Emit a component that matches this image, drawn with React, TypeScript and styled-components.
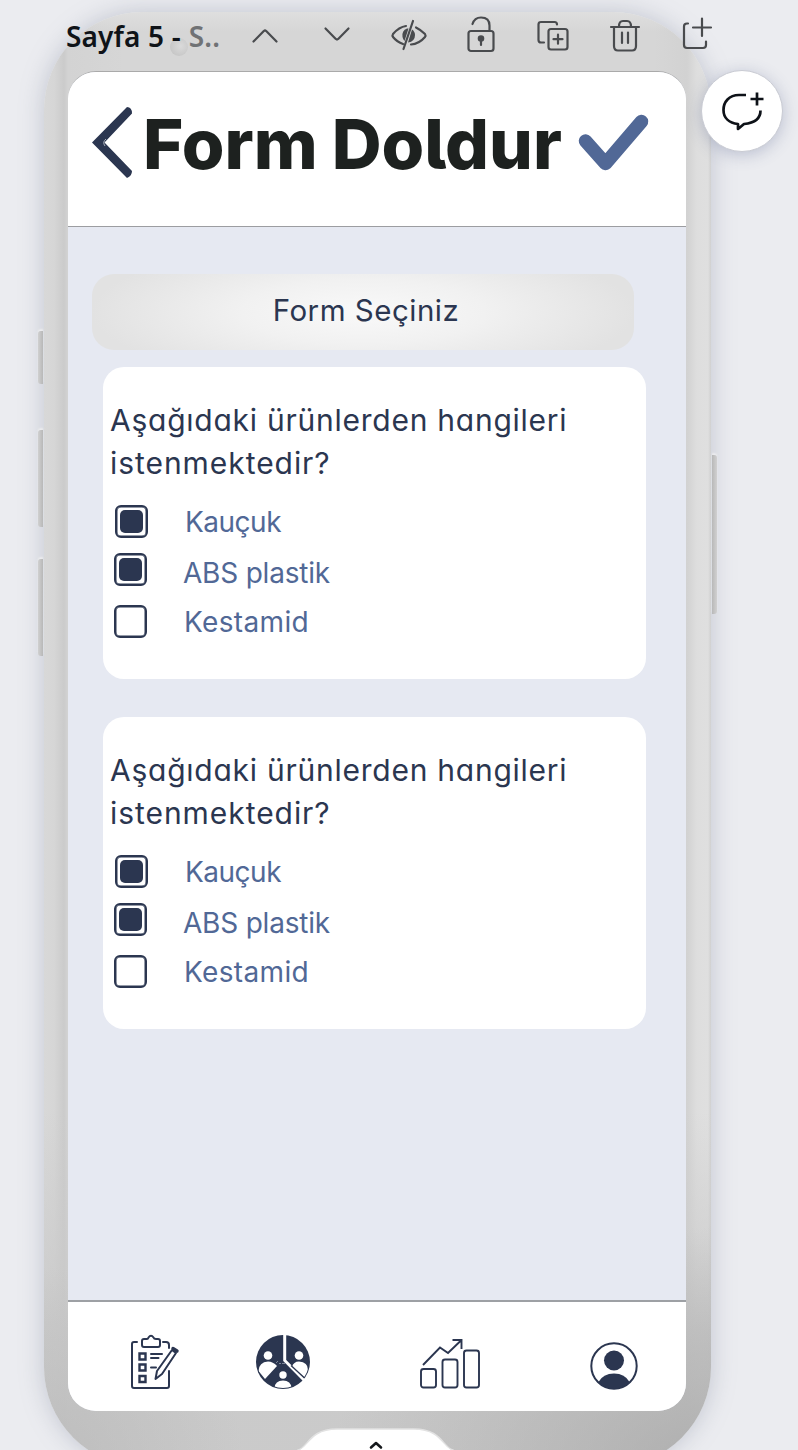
import React from "react";
import styled, { createGlobalStyle } from "styled-components";

const navy = "#2b3650";
const blue = "#516896";

const GlobalStyle = createGlobalStyle`
  * { box-sizing: border-box; }
  body { margin: 0; background: #ebecf0; }
  svg { display: block; overflow: visible; flex: none; }
  h1, h2, p { margin: 0; font-weight: 400; }
`;

const Page = styled.div`
  position: relative;
  width: 798px;
  height: 1450px;
  overflow: hidden;
  padding: 12px 0 0 44px;
  background: #ebecf0;
`;

const Phone = styled.div`
  position: relative;
  width: 667px;
  height: 1455px;
  padding: 59px 25px 0 24px;
  border-radius: 98px 98px 100px 100px;
  background:
    linear-gradient(180deg, rgba(226, 226, 226, 0.7) 0, rgba(215, 215, 215, 0) 20px),
    radial-gradient(ellipse 380px 240px at 100% 100%, rgba(160, 160, 160, 0.65), rgba(160, 160, 160, 0)),
    radial-gradient(ellipse 200px 200px at 0% 100%, rgba(180, 180, 180, 0.6), rgba(180, 180, 180, 0)),
    linear-gradient(180deg, rgba(200, 200, 200, 0) 1100px, rgba(201, 201, 201, 0.9) 1320px),
    linear-gradient(90deg, #d8d8d8 0, #d6d6d6 10px, #cbcbcb 20px, #d3d3d3 24px, #d6d6d6 80px, #d6d6d6 610px, #d2d2d2 643px, #dedede 653px, #dfdfdf 664px, #d0d0d0 667px);
  box-shadow: 0 0 24px rgba(120, 128, 150, 0.36);
`;

const SideKey = styled.span<{ $side: "left" | "right"; $top: number; $height: number }>`
  position: absolute;
  ${(p) => p.$side}: -6px;
  top: ${(p) => p.$top}px;
  width: 5px;
  height: ${(p) => p.$height}px;
  border-radius: ${(p) => (p.$side === "left" ? "3px 0 0 3px" : "0 3px 3px 0")};
  background: linear-gradient(${(p) => (p.$side === "left" ? "90deg" : "270deg")}, #d0d0d0, #b8b8b8);
  box-shadow: 0 -2px 2px rgba(240, 240, 240, 0.8);
`;

const Screen = styled.main`
  display: flex;
  flex-direction: column;
  width: 618px;
  height: 1340px;
  overflow: hidden;
  border-top: 1px solid #aaaaaa;
  border-radius: 28px;
  background: #e6e9f2;
`;

const Header = styled.header`
  display: flex;
  align-items: flex-start;
  height: 155px;
  padding: 34px 0 0 24px;
  background: #ffffff;
  border-bottom: 1px solid #9c9da1;
`;

const Title = styled.h1`
  width: 435px;
  margin: -4px 0 0 9px;
  font: 760 69px/84px Inter, sans-serif;
  font-feature-settings: "cv05";
  letter-spacing: 0;
  word-spacing: -1px;
  white-space: nowrap;
  color: #1d211f;
`;

const CheckMark = styled.svg`
  margin-top: 8px;
`;

const Content = styled.section`
  display: flex;
  flex-direction: column;
  flex: 1;
  padding: 47px 0 0 24px;
`;

const FormSelect = styled.button`
  width: 542px;
  height: 76px;
  padding: 0 0 4px 6px;
  border: 0;
  border-radius: 22px;
  background: radial-gradient(ellipse 50% 95% at 50% 50%, #f9f9f9 0%, #f1f1f1 45%, #e2e2e2 100%);
  color: ${navy};
  font: 400 29.5px/40px Inter, sans-serif;
  font-feature-settings: "cv11";
  letter-spacing: 0.5px;
`;

const Card = styled.article<{ $gap: number }>`
  width: 542.5px;
  height: 312px;
  margin: ${(p) => p.$gap}px 0 0 11px;
  padding: 32px 0 0 7px;
  border-radius: 21px;
  background: #ffffff;
`;

const Question = styled.h2`
  height: 106px;
  color: ${navy};
  font: 400 30px/43px Inter, sans-serif;
  font-feature-settings: "cv11";
  white-space: nowrap;
`;

const Line = styled.span<{ $spacing: number }>`
  display: block;
  letter-spacing: ${(p) => p.$spacing}px;
`;

const Option = styled.label<{ $height: number; $inset: number }>`
  display: flex;
  align-items: flex-start;
  height: ${(p) => p.$height}px;
  padding-left: ${(p) => p.$inset}px;
`;

const Box = styled.span<{ $checked?: boolean }>`
  flex: none;
  width: 33px;
  height: 33px;
  padding: 3px;
  border: 2px solid ${navy};
  border-radius: 6px;
  box-shadow: inset 0 0 0 0.5px ${navy};

  &::before {
    display: ${(p) => (p.$checked ? "block" : "none")};
    width: 23px;
    height: 23px;
    border-radius: 5px;
    background: ${navy};
    content: "";
  }
`;

const OptionText = styled.span<{ $drop: number; $spacing: number; $indent: number }>`
  margin: ${(p) => p.$drop}px 0 0 ${(p) => p.$indent}px;
  color: ${blue};
  font: 400 28px/32px Inter, sans-serif;
  letter-spacing: ${(p) => p.$spacing}px;
  white-space: nowrap;
`;

const TabBar = styled.nav`
  display: flex;
  align-items: flex-start;
  height: 111px;
  padding: 33px 0 0 62px;
  border-top: 2px solid #9da0a4;
  background: #ffffff;
`;

const Tab = styled.span<{ $width: number; $drop?: number }>`
  flex: none;
  width: ${(p) => p.$width}px;
  padding-top: ${(p) => p.$drop ?? 0}px;
`;

const Toolbar = styled.div`
  position: absolute;
  top: 15px;
  left: 66px;
  display: flex;
  align-items: center;
  height: 42px;
`;

const PageName = styled.p`
  width: 181px;
  color: #0f1318;
  font: 600 28px/40px "Noto Sans", sans-serif;
  letter-spacing: 0.15px;
  white-space: nowrap;
`;

const Muted = styled.span`
  margin-left: 8px;
  color: #707275;
`;

const ToolIcon = styled.svg`
  width: 36px;
  height: 40px;
  margin-right: 36px;
  fill: none;
  stroke: #494b4e;
  stroke-width: 2.2;
  stroke-linecap: round;
  stroke-linejoin: round;
`;

const Camera = styled.span`
  position: absolute;
  top: 38px;
  left: 170px;
  width: 18px;
  height: 18px;
  border-radius: 50%;
  background: radial-gradient(circle at 60% 45%, #dadada, #c0c0c0);
`;

const CommentButton = styled.button`
  position: absolute;
  top: 70px;
  left: 701px;
  display: grid;
  place-items: center;
  width: 82px;
  height: 82px;
  padding: 0;
  border: 1px solid #c9cbd3;
  border-radius: 50%;
  background: #ffffff;
  box-shadow: 0 3px 16px rgba(75, 90, 135, 0.3);
`;

const Drawer = styled.svg`
  position: absolute;
  left: 292px;
  bottom: 0;
`;

const options = [
  { name: "Kauçuk", checked: true, height: 48, inset: 5, indent: 37, drop: 1, spacing: -0.5 },
  { name: "ABS plastik", checked: true, height: 52, inset: 4, indent: 36, drop: 4, spacing: -0.2 },
  { name: "Kestamid", checked: false, height: 33, inset: 4, indent: 37, drop: 1, spacing: 0.35 },
];

function QuestionCard({ gap }: { gap: number }) {
  return (
    <Card $gap={gap}>
      <Question>
        <Line $spacing={0.75}>Aşağıdaki ürünlerden hangileri</Line>
        <Line $spacing={0.95}>istenmektedir?</Line>
      </Question>
      {options.map((o) => (
        <Option key={o.name} $height={o.height} $inset={o.inset}>
          <Box $checked={o.checked} />
          <OptionText $drop={o.drop} $indent={o.indent} $spacing={o.spacing}>{o.name}</OptionText>
        </Option>
      ))}
    </Card>
  );
}

function ClipboardIcon() {
  return (
    <svg width="50" height="56" viewBox="0 0 50 56" fill="none" stroke={navy} strokeWidth="2" strokeLinecap="round" strokeLinejoin="round">
      <path d="M7 7H4Q2 7 2 9V51Q2 53 4 53H37Q39 53 39 51V36M33 7H36Q39 7 39 10V13" />
      <path d="M14 4H17Q18 4 18.5 2.5Q21 -1 23.5 2.5Q24 4 26 4H28Q30 4 30 6V10Q30 12 28 12H14Q12 12 12 10V6Q12 4 14 4Z" />
      <path d="M9.5 18.5H15.5V24.5H9.5ZM9.5 29.5H15.5V35.5H9.5ZM9.5 41H15.5V47H9.5Z" strokeWidth="2.4" strokeLinejoin="miter" />
      <path d="M21 19H32M21 23H28.5M21 32.5H26" />
      <path d="M42 15L46 18L32 39L25.5 44L27 36ZM43 13.5L47 16" />
      <path d="M43 13.5L47 16" strokeWidth="3.4" />
    </svg>
  );
}

function PieIcon() {
  return (
    <svg width="54" height="54" viewBox="0 0 54 54">
      <defs>
        <clipPath id="pie-disc"><circle cx="27" cy="27" r="26" /></clipPath>
      </defs>
      <circle cx="27" cy="27" r="27" fill={navy} />
      <path d="M28.7 -1V25.5L48 45" fill="none" stroke="#fff" strokeWidth="3" />
      <g fill="#fff" clipPath="url(#pie-disc)">
        <circle cx="12" cy="20.5" r="4.3" />
        <path d="M2.5 36Q3 27 12 26.5Q17 26.5 21 31L9 44Z" />
        <circle cx="43" cy="20.5" r="4.3" />
        <path d="M36 32Q37.5 26.5 43 26.5Q52 27 52 35Q52 39 49 43L36 31.5Z" />
        <circle cx="27" cy="40" r="3.7" />
        <path d="M18.5 54Q18.5 45.5 27 45.5Q35.5 45.5 35.5 54Z" />
      </g>
      <path d="M35 30.5L48.5 43" stroke={navy} strokeWidth="1.3" />
      <path d="M20 28l2-2M23 28.5h2M26 28.5h3" stroke="#7e8799" strokeWidth="1" />
    </svg>
  );
}

function ChartIcon() {
  return (
    <svg width="60" height="50" viewBox="0 0 60 50" fill="none" stroke={navy} strokeWidth="1.9" strokeLinejoin="round">
      <rect x="1" y="30" width="15" height="18.5" rx="2.5" />
      <rect x="22.5" y="20.5" width="15" height="28" rx="2.5" />
      <rect x="44" y="11.5" width="15" height="37" rx="2.5" />
      <path d="M3 26L20 8.5L28 14L41 1.5M32.5 1H41.5V10" strokeLinejoin="miter" />
    </svg>
  );
}

function UserIcon() {
  return (
    <svg width="48" height="48" viewBox="0 0 48 48">
      <circle cx="24" cy="24" r="22.7" fill="none" stroke={navy} strokeWidth="2" />
      <circle cx="24" cy="18.5" r="10" fill={navy} />
      <path d="M8.5 40Q13 31.5 24 31.5Q35 31.5 39.5 40Q33 47 24 47Q15 47 8.5 40Z" fill={navy} />
    </svg>
  );
}

export default function App() {
  return (
    <Page>
      <GlobalStyle />
      <Phone>
        <SideKey $side="left" $top={319} $height={53} />
        <SideKey $side="left" $top={418} $height={97} />
        <SideKey $side="left" $top={547} $height={97} />
        <SideKey $side="right" $top={443} $height={159} />
        <Screen>
          <Header>
            <svg width="42" height="73" viewBox="0 0 42 73">
              <path d="M0 36.5L35 1Q40 1 40 7.5L12.5 36.5L40 65Q40 70 35 72Z" fill={navy} />
              <path d="M14 33Q10 36 13 40" fill="none" stroke="#a9afbb" />
            </svg>
            <Title>Form Doldur</Title>
            <CheckMark width="72" height="58" viewBox="0 0 72 58" fill="none" stroke={blue} strokeWidth="13.5" strokeLinecap="round" strokeLinejoin="round">
              <path d="M7.5 27L27.5 49.5L63.5 7.5" />
            </CheckMark>
          </Header>
          <Content>
            <FormSelect>Form Seçiniz</FormSelect>
            <QuestionCard gap={17} />
            <QuestionCard gap={38} />
          </Content>
          <TabBar>
            <Tab $width={126}><ClipboardIcon /></Tab>
            <Tab $width={164}><PieIcon /></Tab>
            <Tab $width={170} $drop={4}><ChartIcon /></Tab>
            <Tab $width={48} $drop={7}><UserIcon /></Tab>
          </TabBar>
        </Screen>
      </Phone>
      <Camera />
      <Toolbar>
        <PageName>Sayfa 5 -<Muted>S..</Muted></PageName>
        <ToolIcon viewBox="0 0 36 40"><path d="M6.5 25.5L16.8 15Q18 14 19.2 15L29.5 25.5" /></ToolIcon>
        <ToolIcon viewBox="0 0 36 40"><path d="M6.5 12.5L16.8 23Q18 24 19.2 23L29.5 12.5" /></ToolIcon>
        <ToolIcon viewBox="0 0 36 40">
          <path d="M15 10Q8 11 2 18Q1 19.5 2 21Q6 26 12 28M25 11.5Q30 14 34 18Q35 19.5 34 21Q28 28 20 28.5M22 5L12.5 33" />
          <path d="M16 12.5Q10.5 14.5 11.5 21Q12 23.5 13.5 25L17.5 12.5ZM21 13.5L17 26.5Q24 25.5 24 19Q24 15.5 21 13.5Z" fill="#494b4e" stroke="none" />
        </ToolIcon>
        <ToolIcon viewBox="0 0 36 40">
          <rect x="5.5" y="15" width="25" height="20" rx="2.5" />
          <path d="M9.5 8Q11.5 1.5 18 1.5Q26.5 1.5 26.5 9.5V15M18 24V29" />
          <circle cx="18" cy="22.5" r="2.2" fill="#494b4e" />
        </ToolIcon>
        <ToolIcon viewBox="0 0 36 40">
          <path d="M9 26.5H6Q3.5 26.5 3.5 24V8.5Q3.5 6 6 6H19.5Q22 6 22 8.5" />
          <rect x="13.5" y="13" width="19" height="20.5" rx="2.5" />
          <path d="M23 18.7V27.7M18.5 23.2H27.5" />
        </ToolIcon>
        <ToolIcon viewBox="0 0 36 40">
          <path d="M4 11H32M7 11V30Q7 34.5 11 34.5H25Q29 34.5 29 30V11M12 10.5Q12 5 16 5H20Q24 5 24 10.5M15 16.5V27M21 16.5V27" />
        </ToolIcon>
        <ToolIcon viewBox="0 0 36 40">
          <path d="M9 7.5H8Q5 7.5 5 10.5V29Q5 32 8 32H24Q27 32 27 29V25.5M23 2.5V20M14 11.5H32" />
        </ToolIcon>
      </Toolbar>
      <CommentButton aria-label="+">
        <svg width="42" height="40" viewBox="0 0 42 40" fill="none" stroke="#0e1218" strokeWidth="2.7" strokeLinejoin="round">
          <path d="M25 4H18C8 4 2.5 11 2.5 19C2.5 27 8 32 17 33V38L23 33C34 32 39.5 27 39.5 19.5M36 1.5V14.5M29.5 8H42.5" />
        </svg>
      </CommentButton>
      <Drawer width="168" height="22" viewBox="0 0 168 22">
        <path d="M6 22C16 20 17 1 45 1H122C150 1 151 20 161 22V24H6Z" fill="#fff" stroke="#e2e2e2" strokeWidth="1.5" />
        <path d="M79 19.5L84 15L89 19.5" fill="none" stroke="#15181c" strokeWidth="2.6" strokeLinecap="round" strokeLinejoin="round" />
      </Drawer>
    </Page>
  );
}
